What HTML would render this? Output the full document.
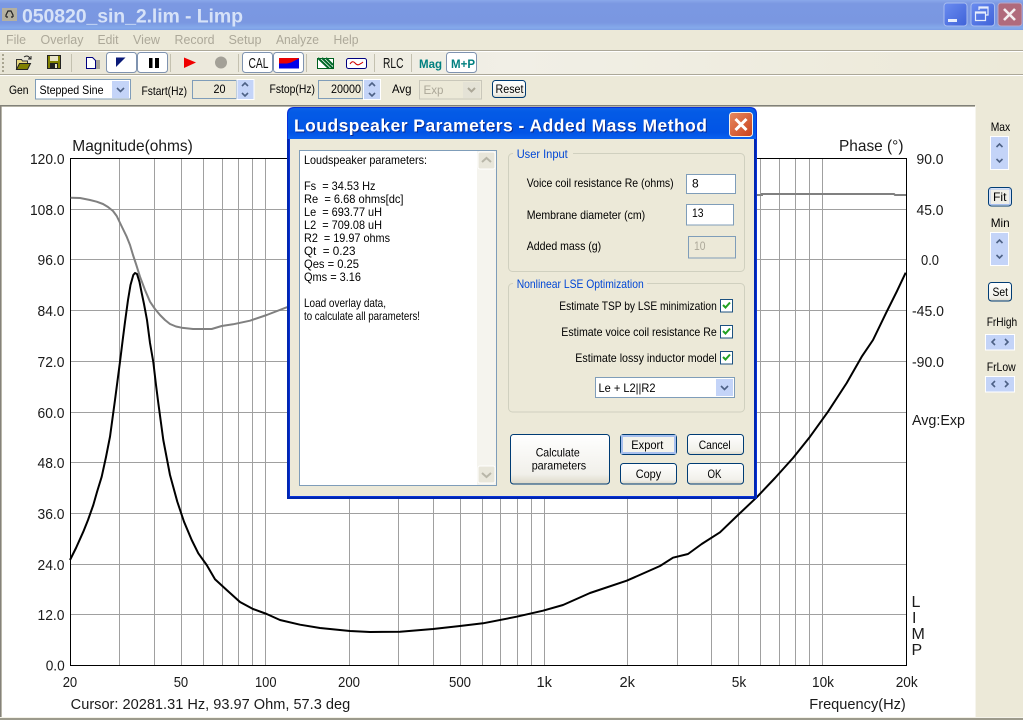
<!DOCTYPE html>
<html><head><meta charset="utf-8"><title>Limp</title>
<style>
html,body{margin:0;padding:0;background:#ece9d8;overflow:hidden}
svg{display:block}
text{font-family:"Liberation Sans",Arial,sans-serif;white-space:pre}
.u{font-size:12px;fill:#000}
.c{font-size:14.5px;fill:#1a1a1a}
.m{font-size:12.5px;fill:#aca899}
.spin{fill:#c4d4f8;stroke:#fff;stroke-width:1}
.ar{fill:none;stroke:#4d6185;stroke-width:1.6}
.inp{fill:#fff;stroke:#7f9db9}
.btn{fill:url(#bg);stroke:#003c74}
</style></head><body>
<svg width="1023" height="720" viewBox="0 0 1023 720" xmlns="http://www.w3.org/2000/svg">
<defs>
<linearGradient id="tb" x1="0" y1="0" x2="0" y2="1"><stop offset="0" stop-color="#8aa8ea"/><stop offset=".12" stop-color="#7b98e2"/><stop offset=".75" stop-color="#7a97e1"/><stop offset=".93" stop-color="#85aaea"/><stop offset="1" stop-color="#7c9de4"/></linearGradient>
<linearGradient id="dt" x1="0" y1="0" x2="0" y2="1"><stop offset="0" stop-color="#0a5fe8"/><stop offset=".15" stop-color="#045be6"/><stop offset=".8" stop-color="#0254e6"/><stop offset="1" stop-color="#0a62f0"/></linearGradient>
<linearGradient id="bg" x1="0" y1="0" x2="0" y2="1"><stop offset="0" stop-color="#fff"/><stop offset=".8" stop-color="#f1f0ea"/><stop offset="1" stop-color="#dcd8c8"/></linearGradient>
<linearGradient id="tl" x1="0" y1="0" x2="1" y2="0"><stop offset="0" stop-color="#e8e5d6"/><stop offset=".5" stop-color="#f1efe6"/><stop offset="1" stop-color="#ece9d8"/></linearGradient>
<linearGradient id="mb" x1="0" y1="0" x2="1" y2="1"><stop offset="0" stop-color="#6a8cf0"/><stop offset="1" stop-color="#3f62d8"/></linearGradient>
<linearGradient id="cl" x1="0" y1="0" x2="1" y2="1"><stop offset="0" stop-color="#e88a60"/><stop offset="1" stop-color="#c8401c"/></linearGradient>
</defs>

<!-- window background -->
<rect width="1023" height="720" fill="#ece9d8"/>
<!-- title bar -->
<rect width="1023" height="30" fill="url(#tb)"/>
<rect x="2" y="8" width="15" height="13" fill="#b4b0a0"/>
<path d="M6 17v-2l2-4h3l2 4v2M6 17h2M11 17h2" fill="none" stroke="#222" stroke-width="1.2"/>
<text x="22" y="22.500" font-size="19.500" font-weight="700" fill="#d6e2f8" textLength="221" lengthAdjust="spacing">050820_sin_2.lim - Limp</text>
<rect x="944" y="3" width="23" height="23" rx="3" fill="url(#mb)" stroke="#a8bdf0"/>
<rect x="948" y="19" width="9" height="3" fill="#e8eefb"/>
<rect x="971" y="3" width="23.500" height="23" rx="3" fill="url(#mb)" stroke="#a8bdf0"/>
<path d="M979 10V7h9v8h-3M975.500 12h10v8.500h-10zM975.500 13h10M979 8h9" fill="none" stroke="#e8eefb" stroke-width="1.200"/>
<rect x="998" y="3" width="24" height="23" rx="3" fill="#b06a7c" stroke="#b8a8c8"/>
<path d="M1004 9l11 11M1015 9l-11 11" stroke="#f4eef0" stroke-width="2.600"/>

<!-- menu -->
<text class="m" x="6" y="44" textLength="20" lengthAdjust="spacingAndGlyphs">File</text>
<text class="m" x="40.500" y="44" textLength="43" lengthAdjust="spacingAndGlyphs">Overlay</text>
<text class="m" x="97.500" y="44" textLength="21" lengthAdjust="spacingAndGlyphs">Edit</text>
<text class="m" x="133" y="44" textLength="27" lengthAdjust="spacingAndGlyphs">View</text>
<text class="m" x="174.500" y="44" textLength="40" lengthAdjust="spacingAndGlyphs">Record</text>
<text class="m" x="228.500" y="44" textLength="33" lengthAdjust="spacingAndGlyphs">Setup</text>
<text class="m" x="276" y="44" textLength="43" lengthAdjust="spacingAndGlyphs">Analyze</text>
<text class="m" x="333.500" y="44" textLength="25" lengthAdjust="spacingAndGlyphs">Help</text>

<!-- toolbar -->
<rect y="50" width="1023" height="1" fill="#aca899"/><rect y="51" width="1023" height="1" fill="#fff"/>
<rect y="52" width="1023" height="22" fill="url(#tl)"/>
<rect y="74" width="1023" height="1" fill="#aca899"/><rect y="75" width="1023" height="1" fill="#fff"/>
<path d="M3 54v18" stroke="#a8a490" stroke-width="2" stroke-dasharray="2 2"/>
<!-- open -->
<path d="M16.500 69.500V59.500h5l1 1.500h5v3" fill="#e8d880" stroke="#333"/>
<path d="M16.500 69.500l3-6h11l-3 6z" fill="#808000" stroke="#222"/>
<path d="M24 57q3-2 5 0l1.500 2M31 56v3h-3" fill="none" stroke="#222"/>
<!-- save -->
<rect x="47.500" y="55.500" width="13" height="13" fill="#808000" stroke="#222"/>
<rect x="50" y="56" width="8" height="5" fill="#e8e4c8"/><rect x="50" y="63" width="8" height="5.500" fill="#222"/><rect x="55" y="64" width="2" height="4" fill="#e8e4c8"/>
<path d="M71.500 54v18M170.500 54v18M238.500 54v18M306.500 54v18M374.500 54v18M411.500 54v18" stroke="#c4c1b0"/>
<!-- new -->
<rect x="91" y="60" width="9" height="9" fill="#a8a498"/>
<path d="M86.500 57.500h6l3 3v8h-9z" fill="#fff" stroke="#000080"/>
<!-- toggle buttons -->
<rect x="106.500" y="52.500" width="30" height="20" rx="3" fill="#fff" stroke="#7f93b0"/>
<path d="M116 57.500h9.500L116 67z" fill="#0a1a78"/>
<rect x="137.500" y="52.500" width="30" height="20" rx="3" fill="#fff" stroke="#7f93b0"/>
<rect x="149" y="58" width="3.500" height="10" fill="#000"/><rect x="155" y="58" width="4" height="10" fill="#000"/>
<path d="M184 57.500L196 62.500 184 68z" fill="#f00000"/>
<circle cx="221" cy="62.500" r="6" fill="#a3a097"/>
<rect x="242.500" y="52.500" width="30" height="20" rx="3" fill="#fff" stroke="#7f93b0"/>
<text x="248.500" y="68" font-size="14.500" fill="#111" textLength="20" lengthAdjust="spacingAndGlyphs">CAL</text>
<rect x="273.500" y="52.500" width="30" height="20" rx="3" fill="#fff" stroke="#7f93b0"/>
<rect x="279" y="58" width="20" height="10.500" fill="#0000e8"/>
<path d="M279 58h20l0 .5-8 4-4 1h-8z" fill="#e80000"/>
<!-- green -->
<rect x="317.500" y="58.500" width="16" height="10" fill="#fff" stroke="#006020"/>
<path d="M318 58l11 10.500M322 58l11 10.500M326 58l7 7" stroke="#006828" stroke-width="2"/>
<rect x="346.500" y="58.500" width="20" height="10" rx="2" fill="#fff" stroke="#000080"/>
<path d="M350 64q2.500-4 5-1t5 1q2-1 3-2" fill="none" stroke="#d00000"/>
<text x="383" y="68" font-size="14.500" fill="#111" textLength="20.500" lengthAdjust="spacingAndGlyphs">RLC</text>
<text x="419" y="68" font-size="12px" font-weight="700" fill="#008080" textLength="23" lengthAdjust="spacingAndGlyphs">Mag</text>
<rect x="446.500" y="52.500" width="30" height="20" rx="3" fill="#fff" stroke="#7f93b0"/>
<text x="451" y="68" font-size="12px" font-weight="700" fill="#008080" textLength="24" lengthAdjust="spacingAndGlyphs">M+P</text>

<!-- row 2 -->
<text class="u" x="9" y="94" textLength="19.500" lengthAdjust="spacingAndGlyphs">Gen</text>
<rect x="35.500" y="79.500" width="95" height="19.500" fill="#fff" stroke="#7f9db9"/>
<text class="u" x="39.500" y="94" textLength="64" lengthAdjust="spacingAndGlyphs">Stepped Sine</text>
<rect x="112" y="81" width="17" height="17" fill="#c4d4f8"/><path d="M117 88l3.500 3.500L124 88" class="ar" stroke-width="2"/>
<text class="u" x="141.500" y="95" textLength="45.500" lengthAdjust="spacingAndGlyphs">Fstart(Hz)</text>
<rect x="192.500" y="80.500" width="44" height="18" fill="#ece9d8" stroke="#7f9db9"/>
<text class="u" x="213.500" y="93" textLength="12" lengthAdjust="spacingAndGlyphs">20</text>
<rect x="237" y="79.500" width="17" height="20" class="spin"/>
<path d="M242 86l3-3 3 3M242 93l3 3 3-3" class="ar"/>
<text class="u" x="269.500" y="93" textLength="45.500" lengthAdjust="spacingAndGlyphs">Fstop(Hz)</text>
<rect x="318.500" y="80.500" width="44.500" height="18" fill="#ece9d8" stroke="#7f9db9"/>
<text class="u" x="331" y="93" textLength="30" lengthAdjust="spacingAndGlyphs">20000</text>
<rect x="363.500" y="79.500" width="17" height="20" class="spin"/>
<path d="M369 86l3-3 3 3M369 93l3 3 3-3" class="ar"/>
<text class="u" x="392" y="93" textLength="19.500" lengthAdjust="spacingAndGlyphs">Avg</text>
<rect x="419.500" y="80.500" width="62" height="18.500" fill="#ece9d8" stroke="#c9c7ba"/>
<text class="u" x="423.500" y="94" style="fill:#aca899" textLength="20" lengthAdjust="spacingAndGlyphs">Exp</text>
<rect x="463" y="82" width="17" height="16" fill="#e4e2d6"/><path d="M468 88l3.500 3.500L475 88" fill="none" stroke="#aca899" stroke-width="2"/>
<rect x="492.500" y="80.500" width="33" height="17" rx="3" class="btn"/>
<text class="u" x="495.500" y="93" textLength="28" lengthAdjust="spacingAndGlyphs">Reset</text>

<!-- chart panel -->
<rect y="105" width="975" height="1.500" fill="#808078"/>
<rect x="0" y="105" width="1.500" height="613" fill="#85827a"/>
<rect x="2" y="107" width="973" height="610" fill="#fff"/>
<rect x="975" y="106" width="1" height="611" fill="#f6f5ee"/>
<rect y="717" width="1023" height="1" fill="#f4f2e8"/><rect y="718" width="1023" height="2" fill="#9c9a8c"/>

<path d="M119.500 158v507M154.500 158v507M181.500 158v507M203.500 158v507M222.500 158v507M238.500 158v507M252.500 158v507M265.500 158v507M349.500 158v507M398.500 158v507M433.500 158v507M460.500 158v507M482.500 158v507M500.500 158v507M517.500 158v507M531.500 158v507M544.500 158v507M627.500 158v507M677.500 158v507M711.500 158v507M738.500 158v507M760.500 158v507M779.500 158v507M795.500 158v507M809.500 158v507M822.500 158v507M70 209.500h836M70 259.500h836M70 310.500h836M70 361.500h836M70 412.500h836M70 462.500h836M70 513.500h836M70 564.500h836M70 614.500h836" stroke="#a0a0a0" fill="none"/>
<path d="M70.500 158.500h836v507h-836z" fill="none" stroke="#000"/>
<!-- gray curve -->
<polyline fill="none" stroke="#808080" stroke-width="2" stroke-linejoin="round" points="70.700,197.700 80,198 90,200 96.700,201.700 103,204 108,207 113,211 116.700,216 122,227 126.700,236.700 130,245 133,255 136,264 140,276.700 145,290 150,301.700 155,309 160,315 165,320 170,324 176,326.500 181.700,327.700 193,329 211.700,329 221.700,326 233,324.300 250,320.700 266.700,315 286.700,307.300 300,303"/>
<polyline fill="none" stroke="#808080" stroke-width="2" points="750,195 762,195 762,194 894,194 895,195 906,195"/>
<!-- black curve -->
<polyline fill="none" stroke="#000" stroke-width="2" stroke-linejoin="round" points="70,560 76,548 83.300,531.700 88,520 93.300,505 97,492 101.700,476.700 106,457 110,436.700 115,400 120,361.700 122.700,340 125,322 128,300 130.500,285 133.300,275 135,273 137,274 139.500,282 141.700,293 144,304 147,320 150,343 153.300,362 156,385 158.300,403 163.300,440 170,475 177.300,501.700 184,521.700 191.700,540 198.300,553.300 206.700,565 215,579.300 226.700,590 240,602 253,609 266.700,614 280,620 300,624.700 320,628 350,631 370,632 400,631.700 433,629 460,626 483,623.300 516.700,616.700 543,610.700 563,605 590,593 626.700,580.700 660,566 673,557.700 688,554 701.700,544 720,532.300 738,515 756.700,497.300 775,478 793,458 810,436.700 828,411.700 846.700,383 861.700,356.700 873,340 886.700,311.700 896.700,291.700 905.700,272.700"/>

<!-- chart labels -->
<text class="c" x="72.300" y="151" style="font-size:16px" textLength="120.500" lengthAdjust="spacingAndGlyphs">Magnitude(ohms)</text>
<text class="c" x="839" y="151" style="font-size:16px" textLength="64.500" lengthAdjust="spacingAndGlyphs">Phase (°)</text>
<text class="c" x="30" y="164" textLength="34.500" lengthAdjust="spacingAndGlyphs">120.0</text>
<text class="c" x="30" y="215" textLength="34.500" lengthAdjust="spacingAndGlyphs">108.0</text>
<text class="c" x="37.500" y="265" textLength="27" lengthAdjust="spacingAndGlyphs">96.0</text>
<text class="c" x="37.500" y="316" textLength="27" lengthAdjust="spacingAndGlyphs">84.0</text>
<text class="c" x="37.500" y="367" textLength="27" lengthAdjust="spacingAndGlyphs">72.0</text>
<text class="c" x="37.500" y="418" textLength="27" lengthAdjust="spacingAndGlyphs">60.0</text>
<text class="c" x="37.500" y="468" textLength="27" lengthAdjust="spacingAndGlyphs">48.0</text>
<text class="c" x="37.500" y="519" textLength="27" lengthAdjust="spacingAndGlyphs">36.0</text>
<text class="c" x="37.500" y="570" textLength="27" lengthAdjust="spacingAndGlyphs">24.0</text>
<text class="c" x="37.500" y="620" textLength="27" lengthAdjust="spacingAndGlyphs">12.0</text>
<text class="c" x="45.700" y="670.500" textLength="19" lengthAdjust="spacingAndGlyphs">0.0</text>
<text class="c" x="62.700" y="687" textLength="14.500" lengthAdjust="spacingAndGlyphs">20</text>
<text class="c" x="173.700" y="687" textLength="14.500" lengthAdjust="spacingAndGlyphs">50</text>
<text class="c" x="255" y="687" textLength="21.500" lengthAdjust="spacingAndGlyphs">100</text>
<text class="c" x="338" y="687" textLength="22" lengthAdjust="spacingAndGlyphs">200</text>
<text class="c" x="449" y="687" textLength="22" lengthAdjust="spacingAndGlyphs">500</text>
<text class="c" x="536.500" y="687" textLength="15.500" lengthAdjust="spacingAndGlyphs">1k</text>
<text class="c" x="619.500" y="687" textLength="15.500" lengthAdjust="spacingAndGlyphs">2k</text>
<text class="c" x="731.700" y="687" textLength="14.500" lengthAdjust="spacingAndGlyphs">5k</text>
<text class="c" x="812" y="687" textLength="22" lengthAdjust="spacingAndGlyphs">10k</text>
<text class="c" x="895.700" y="687" textLength="22" lengthAdjust="spacingAndGlyphs">20k</text>
<text class="c" x="70.700" y="709" textLength="279.500" lengthAdjust="spacingAndGlyphs">Cursor: 20281.31 Hz, 93.97 Ohm, 57.3 deg</text>
<text class="c" x="809.300" y="709" textLength="96.500" lengthAdjust="spacingAndGlyphs">Frequency(Hz)</text>
<text class="c" x="916.500" y="164" textLength="27" lengthAdjust="spacingAndGlyphs">90.0</text>
<text class="c" x="916.500" y="215" textLength="27" lengthAdjust="spacingAndGlyphs">45.0</text>
<text class="c" x="921" y="265" textLength="18" lengthAdjust="spacingAndGlyphs">0.0</text>
<text class="c" x="912" y="316" textLength="32" lengthAdjust="spacingAndGlyphs">-45.0</text>
<text class="c" x="912" y="367" textLength="32" lengthAdjust="spacingAndGlyphs">-90.0</text>
<text class="c" x="912" y="425" textLength="53" lengthAdjust="spacingAndGlyphs">Avg:Exp</text>
<text class="c" x="911.500" y="607" style="font-size:16px">L</text>
<text class="c" x="912" y="623" style="font-size:16px">I</text>
<text class="c" x="911.500" y="639" style="font-size:16px">M</text>
<text class="c" x="911.500" y="655" style="font-size:16px">P</text>

<!-- right panel -->
<text class="u" x="990.700" y="131" textLength="19.500" lengthAdjust="spacingAndGlyphs">Max</text>
<rect x="990.500" y="136.500" width="18" height="33" class="spin"/>
<path d="M996.500 147l3-3 3 3M996.500 159l3 3 3-3" class="ar"/>
<rect x="988.500" y="187.500" width="23" height="18.500" rx="3" fill="#fff" stroke="#003c74"/>
<rect x="990" y="189" width="20" height="15.500" fill="#f0efe8" stroke="#a8c0f0"/>
<text class="u" x="993" y="201" textLength="13.500" lengthAdjust="spacingAndGlyphs">Fit</text>
<text class="u" x="990.700" y="227" textLength="19" lengthAdjust="spacingAndGlyphs">Min</text>
<rect x="990.500" y="232.500" width="18" height="33" class="spin"/>
<path d="M996.500 243l3-3 3 3M996.500 255l3 3 3-3" class="ar"/>
<rect x="988.500" y="282.500" width="23" height="18.500" rx="3" class="btn"/>
<text class="u" x="992.500" y="296" textLength="15.500" lengthAdjust="spacingAndGlyphs">Set</text>
<text class="u" x="986.700" y="326" textLength="30.500" lengthAdjust="spacingAndGlyphs">FrHigh</text>
<rect x="985.500" y="334.500" width="29" height="15.500" class="spin"/>
<path d="M995 339l-3 3 3 3M1005 339l3 3-3 3" class="ar"/>
<text class="u" x="986.700" y="371" textLength="29" lengthAdjust="spacingAndGlyphs">FrLow</text>
<rect x="985.500" y="376.500" width="29" height="15.500" class="spin"/>
<path d="M995 381l-3 3 3 3M1005 381l3 3-3 3" class="ar"/>

<!-- dialog -->
<path d="M287 498.500V114q0-7 7-7h456q7 0 7 7v384.500z" fill="#0831d9"/>
<path d="M288 139V115q0-7 7-7h454q7 0 7 7v24z" fill="url(#dt)"/>
<rect x="290" y="139" width="465" height="357" fill="#ece9d8"/>
<path d="M288 139v359h469M755 139v359" fill="none" stroke="#0026b0" stroke-width="2"/>
<text x="295" y="132.500" font-size="17.500" font-weight="700" fill="#0a2a90" textLength="413" lengthAdjust="spacing">Loudspeaker Parameters - Added Mass Method</text>
<text x="294" y="131.500" font-size="17.500" font-weight="700" fill="#fff" textLength="413" lengthAdjust="spacing">Loudspeaker Parameters - Added Mass Method</text>
<rect x="729.500" y="112.500" width="23" height="24" rx="3" fill="url(#cl)" stroke="#f4f0e8"/>
<path d="M735.500 119l11 11M746.500 119l-11 11" stroke="#fff" stroke-width="3"/>

<!-- text box -->
<rect x="299.500" y="150.500" width="197" height="335" fill="#fff" stroke="#7f9db9"/>
<rect x="477" y="151" width="19" height="334" fill="#f5f4ee"/>
<rect x="478" y="152" width="17" height="17" rx="2" fill="#e8e6da" stroke="#fff"/>
<path d="M482 162l4.500-4 4.500 4" fill="none" stroke="#b8b6a8" stroke-width="2"/>
<rect x="478" y="466" width="17" height="17" rx="2" fill="#e8e6da" stroke="#fff"/>
<path d="M482 473l4.500 4 4.500-4" fill="none" stroke="#b8b6a8" stroke-width="2"/>
<text class="u" x="304" y="164" textLength="123" lengthAdjust="spacingAndGlyphs">Loudspeaker parameters:</text>
<text class="u" x="304" y="190" textLength="71.500" lengthAdjust="spacingAndGlyphs">Fs  = 34.53 Hz</text>
<text class="u" x="304" y="203" textLength="99.500" lengthAdjust="spacingAndGlyphs">Re  = 6.68 ohms[dc]</text>
<text class="u" x="304" y="216" textLength="78" lengthAdjust="spacingAndGlyphs">Le  = 693.77 uH</text>
<text class="u" x="304" y="229" textLength="78" lengthAdjust="spacingAndGlyphs">L2  = 709.08 uH</text>
<text class="u" x="304" y="242" textLength="86" lengthAdjust="spacingAndGlyphs">R2  = 19.97 ohms</text>
<text class="u" x="304" y="255" textLength="51.500" lengthAdjust="spacingAndGlyphs">Qt  = 0.23</text>
<text class="u" x="304" y="268" textLength="55" lengthAdjust="spacingAndGlyphs">Qes = 0.25</text>
<text class="u" x="304" y="281" textLength="57" lengthAdjust="spacingAndGlyphs">Qms = 3.16</text>
<text class="u" x="304" y="307" textLength="82" lengthAdjust="spacingAndGlyphs">Load overlay data,</text>
<text class="u" x="304" y="320" textLength="116" lengthAdjust="spacingAndGlyphs">to calculate all parameters!</text>

<!-- User input -->
<rect x="508.500" y="153.500" width="236" height="118" rx="4" fill="none" stroke="#d0d0bf"/>
<rect x="513" y="150" width="60" height="8" fill="#ece9d8"/>
<text class="u" style="fill:#0046d5" x="516.700" y="158" textLength="51" lengthAdjust="spacingAndGlyphs">User Input</text>
<text class="u" x="526.700" y="187" textLength="147" lengthAdjust="spacingAndGlyphs">Voice coil resistance Re (ohms)</text>
<rect x="686.500" y="174.500" width="49" height="19" class="inp"/>
<text class="u" x="692" y="187.500">8</text>
<text class="u" x="526.700" y="219" textLength="118.500" lengthAdjust="spacingAndGlyphs">Membrane diameter (cm)</text>
<rect x="686.500" y="204.500" width="47" height="20.500" class="inp"/>
<text class="u" x="692" y="217" textLength="11.500" lengthAdjust="spacingAndGlyphs">13</text>
<text class="u" x="526.700" y="250" textLength="74.500" lengthAdjust="spacingAndGlyphs">Added mass (g)</text>
<rect x="688.500" y="236.500" width="47" height="21.500" fill="#ece9d8" stroke="#7f9db9"/>
<text class="u" style="fill:#aca899" x="694" y="250" textLength="11.500" lengthAdjust="spacingAndGlyphs">10</text>

<!-- Nonlinear -->
<rect x="508.500" y="283.500" width="236" height="128.500" rx="4" fill="none" stroke="#d0d0bf"/>
<rect x="513" y="280" width="134" height="8" fill="#ece9d8"/>
<text class="u" style="fill:#0046d5" x="516.700" y="288" textLength="127" lengthAdjust="spacingAndGlyphs">Nonlinear LSE Optimization</text>
<text class="u" x="559.300" y="310" textLength="157.500" lengthAdjust="spacingAndGlyphs">Estimate TSP by LSE minimization</text>
<rect x="720.500" y="299.500" width="12" height="12.500" fill="#fff" stroke="#1c5180"/>
<path d="M723 305l2.500 2.500 4.500-5" fill="none" stroke="#21a121" stroke-width="2"/>
<text class="u" x="561.300" y="336" textLength="155.500" lengthAdjust="spacingAndGlyphs">Estimate voice coil resistance Re</text>
<rect x="720.500" y="325.500" width="12" height="12.500" fill="#fff" stroke="#1c5180"/>
<path d="M723 331l2.500 2.500 4.500-5" fill="none" stroke="#21a121" stroke-width="2"/>
<text class="u" x="575.300" y="362" textLength="141.500" lengthAdjust="spacingAndGlyphs">Estimate lossy inductor model</text>
<rect x="720.500" y="351.500" width="12" height="12.500" fill="#fff" stroke="#1c5180"/>
<path d="M723 357l2.500 2.500 4.500-5" fill="none" stroke="#21a121" stroke-width="2"/>
<rect x="595.500" y="377.500" width="139" height="20" class="inp"/>
<text class="u" x="598.500" y="392" textLength="57" lengthAdjust="spacingAndGlyphs">Le + L2||R2</text>
<rect x="716" y="379" width="17" height="17" fill="#c4d4f8"/>
<path d="M721 386l3.500 3.500L728 386" class="ar" stroke-width="2"/>

<!-- buttons -->
<rect x="510.500" y="434.500" width="99" height="49.500" rx="3" class="btn"/>
<text class="u" x="535.700" y="456.500" textLength="44" lengthAdjust="spacingAndGlyphs">Calculate</text>
<text class="u" x="531.700" y="469.500" textLength="54.500" lengthAdjust="spacingAndGlyphs">parameters</text>
<rect x="620.500" y="434.500" width="56" height="20" rx="3" fill="#f4f3ec" stroke="#003c74"/>
<rect x="622" y="436" width="53" height="17" fill="none" stroke="#a8c0ee" stroke-width="2"/>
<text class="u" x="631.300" y="449" textLength="32" lengthAdjust="spacingAndGlyphs">Export</text>
<rect x="687.500" y="434.500" width="56" height="20" rx="3" class="btn"/>
<text class="u" x="698.700" y="449" textLength="32" lengthAdjust="spacingAndGlyphs">Cancel</text>
<rect x="620.500" y="463.500" width="56" height="20.500" rx="3" class="btn"/>
<text class="u" x="635.700" y="478" textLength="25.500" lengthAdjust="spacingAndGlyphs">Copy</text>
<rect x="687.500" y="463.500" width="56" height="20.500" rx="3" class="btn"/>
<text class="u" x="707.500" y="478" textLength="14" lengthAdjust="spacingAndGlyphs">OK</text>
</svg>
</body></html>
